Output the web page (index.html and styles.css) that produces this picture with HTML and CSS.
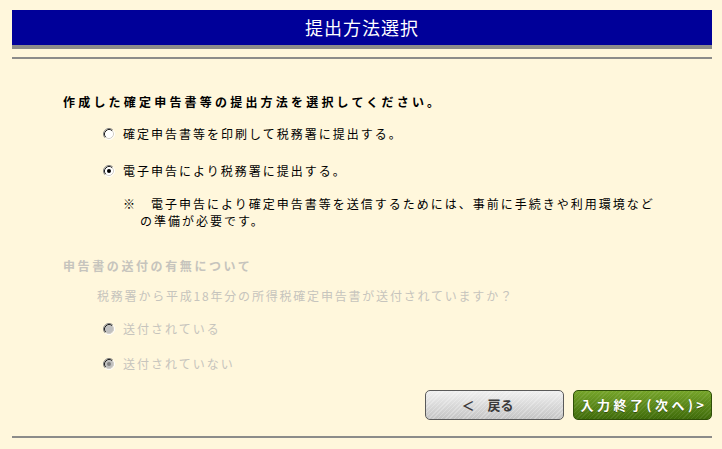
FILE: index.html
```html
<!DOCTYPE html>
<html lang="ja">
<head>
<meta charset="utf-8">
<title>提出方法選択</title>
<link rel="stylesheet" href="styles.css">
</head>
<body>
<div class="page">
  <div class="titlebar">提出方法選択</div>
  <div class="rule"></div>

  <div class="content">
    <div class="lead">作成した確定申告書等の提出方法を選択してください。</div>

    <div class="opt opt-1">
      <svg class="radio" width="12" height="12" viewBox="0 0 12 12">
        <circle cx="6" cy="6" r="5" fill="#ffffff"/>
        <path d="M2.11 9.89 A5.5 5.5 0 0 1 9.89 2.11" fill="none" stroke="#808080"/>
        <path d="M2.82 9.18 A4.5 4.5 0 0 1 9.18 2.82" fill="none" stroke="#202020"/>
        <path d="M9.89 2.11 A5.5 5.5 0 0 1 2.11 9.89" fill="none" stroke="#ffffff"/>
        <path d="M9.18 2.82 A4.5 4.5 0 0 1 2.82 9.18" fill="none" stroke="#d4d0c8"/>
      </svg>
      <span>確定申告書等を印刷して税務署に提出する。</span>
    </div>

    <div class="opt opt-2">
      <svg class="radio" width="12" height="12" viewBox="0 0 12 12">
        <circle cx="6" cy="6" r="5" fill="#ffffff"/>
        <path d="M2.11 9.89 A5.5 5.5 0 0 1 9.89 2.11" fill="none" stroke="#808080"/>
        <path d="M2.82 9.18 A4.5 4.5 0 0 1 9.18 2.82" fill="none" stroke="#202020"/>
        <path d="M9.89 2.11 A5.5 5.5 0 0 1 2.11 9.89" fill="none" stroke="#ffffff"/>
        <path d="M9.18 2.82 A4.5 4.5 0 0 1 2.82 9.18" fill="none" stroke="#d4d0c8"/>
        <circle cx="6" cy="6" r="2" fill="#000000"/>
      </svg>
      <span>電子申告により税務署に提出する。</span>
    </div>

    <div class="note">※　電子申告により確定申告書等を送信するためには、事前に手続きや利用環境など<br>の準備が必要です。</div>

    <div class="section disabled">申告書の送付の有無について</div>
    <div class="question disabled">税務署から平成18年分の所得税確定申告書が送付されていますか？</div>

    <div class="opt opt-3 disabled">
      <svg class="radio" width="12" height="12" viewBox="0 0 12 12">
        <circle cx="6" cy="6" r="5" fill="#c0c0c0"/>
        <path d="M2.11 9.89 A5.5 5.5 0 0 1 9.89 2.11" fill="none" stroke="#808080"/>
        <path d="M2.82 9.18 A4.5 4.5 0 0 1 9.18 2.82" fill="none" stroke="#202020"/>
        <path d="M9.89 2.11 A5.5 5.5 0 0 1 2.11 9.89" fill="none" stroke="#ffffff"/>
        <path d="M9.18 2.82 A4.5 4.5 0 0 1 2.82 9.18" fill="none" stroke="#d4d0c8"/>
      </svg>
      <span>送付されている</span>
    </div>

    <div class="opt opt-4 disabled">
      <svg class="radio" width="12" height="12" viewBox="0 0 12 12">
        <circle cx="6" cy="6" r="5" fill="#c0c0c0"/>
        <path d="M2.11 9.89 A5.5 5.5 0 0 1 9.89 2.11" fill="none" stroke="#808080"/>
        <path d="M2.82 9.18 A4.5 4.5 0 0 1 9.18 2.82" fill="none" stroke="#202020"/>
        <path d="M9.89 2.11 A5.5 5.5 0 0 1 2.11 9.89" fill="none" stroke="#ffffff"/>
        <path d="M9.18 2.82 A4.5 4.5 0 0 1 2.82 9.18" fill="none" stroke="#d4d0c8"/>
        <circle cx="6" cy="6" r="2" fill="#808080"/>
      </svg>
      <span>送付されていない</span>
    </div>
  </div>

  <div class="buttons">
    <div class="btn btn-back">＜　戻る</div>
    <div class="btn btn-next">入力終了(次へ)&gt;</div>
  </div>
  <div class="rule rule-bottom"></div>
</div>
</body>
</html>
```

FILE: styles.css
```css
html, body {
  margin: 0;
  padding: 0;
  background: #fff7dc;
}

body {
  font-family: "Noto Sans CJK JP", "Noto Sans", sans-serif;
  font-size: 12px;
  color: #000;
}

.page {
  width: 700px;
  margin: 10px 0 0 12px;
  display: flex;
  flex-direction: column;
}

.titlebar {
  height: 35px;
  background: #000099;
  color: #ffffff;
  font-size: 18px;
  line-height: 35px;
  letter-spacing: 1px;
  text-align: center;
  border-bottom: 4px solid #8c8c8a;
}

.rule {
  height: 2px;
  margin-top: 8px;
  background: #8c8c8a;
}

.content {
  display: flex;
  flex-direction: column;
  padding-left: 51px;
}

.lead {
  margin-top: 35px;
  height: 16px;
  line-height: 16px;
  font-weight: bold;
  letter-spacing: 3.2px;
}

.opt {
  display: flex;
  align-items: center;
  height: 16px;
  line-height: 16px;
  margin-left: 40px;
  letter-spacing: 2px;
}

.radio {
  flex: none;
  margin-right: 8px;
}

.opt-1 { margin-top: 16px; }
.opt-2 { margin-top: 21px; }

.note {
  margin-top: 16px;
  padding-left: 77px;
  text-indent: -17px;
  line-height: 17px;
  letter-spacing: 2px;
}

.disabled {
  color: #c6c4bd;
}

.section {
  margin-top: 29px;
  height: 16px;
  line-height: 16px;
  font-weight: bold;
  letter-spacing: 2.6px;
}

.question {
  margin-top: 14px;
  margin-left: 34px;
  height: 16px;
  line-height: 16px;
  letter-spacing: 1.8px;
}

.opt-3 { margin-top: 17px; }
.opt-4 { margin-top: 19px; }

.buttons {
  margin-top: 18px;
  display: flex;
  justify-content: flex-end;
  gap: 9px;
}

.btn {
  width: 137px;
  height: 28px;
  line-height: 28px;
  text-align: center;
  border-radius: 5px;
  font-size: 13px;
  font-weight: bold;
}

.btn-back {
  border: 1px solid #5a5a5a;
  color: #3a3a3a;
  background:
    repeating-linear-gradient(135deg, rgba(255,255,255,0.25) 0 1px, rgba(255,255,255,0) 1px 3px),
    linear-gradient(#f0f0f0, #c4c4c4);
  padding-right: 14px;
  width: 123px;
}

.btn-next {
  border: 1px solid #2f4f08;
  color: #ffffff;
  letter-spacing: 3.5px;
  text-indent: 3px;
  background:
    repeating-linear-gradient(135deg, rgba(255,255,255,0.08) 0 1px, rgba(255,255,255,0) 1px 3px),
    linear-gradient(#76a52a, #3f6b0a);
  text-shadow: 0 1px 0 rgba(0,0,0,0.35);
}

.rule-bottom {
  margin-top: 16px;
}
```
